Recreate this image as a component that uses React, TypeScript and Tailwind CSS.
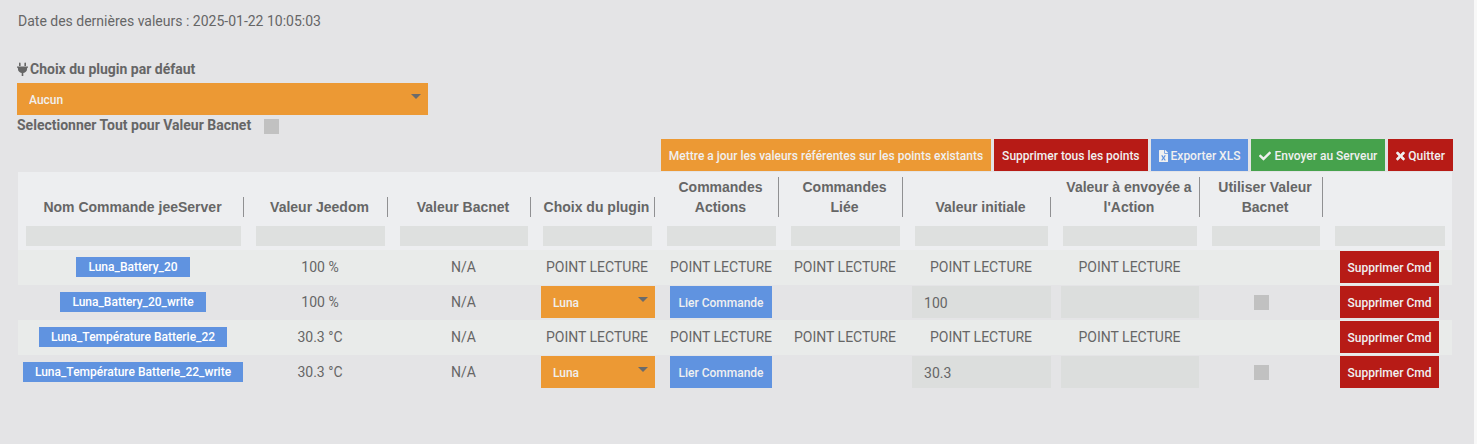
import type { ReactNode } from "react";
import { FaCheck, FaFileExcel, FaPlug, FaTimes } from "react-icons/fa";

type Point = {
  name: string;
  value: string;
  initial?: string;
};

const columns = [
  { label: "Nom Commande jeeServer", width: "w-[16.04%]" },
  { label: "Valeur Jeedom", width: "w-[10.04%]" },
  { label: "Valeur Bacnet", width: "w-[9.97%]" },
  { label: "Choix du plugin", width: "w-[8.65%]" },
  { label: "Commandes Actions", width: "w-[8.65%]" },
  { label: "Commandes Liée", width: "w-[8.65%]" },
  { label: "Valeur initiale", width: "w-[10.32%]" },
  { label: "Valeur à envoyée a l'Action", width: "w-[10.39%]" },
  { label: "Utiliser Valeur Bacnet", width: "w-[8.58%]" },
  { label: "", width: "w-[8.71%]" },
];

const points: Point[] = [
  { name: "Luna_Battery_20", value: "100 %" },
  { name: "Luna_Battery_20_write", value: "100 %", initial: "100" },
  { name: "Luna_Température Batterie_22", value: "30.3 °C" },
  { name: "Luna_Température Batterie_22_write", value: "30.3 °C", initial: "30.3" },
];

const colors = {
  orange: "bg-[#ec9934]",
  red: "bg-[#b71b16]",
  blue: "bg-[#6093e0]",
  green: "bg-[#46a24c]",
};

function Button({ color, children }: { color: keyof typeof colors; children: ReactNode }) {
  return (
    <button
      type="button"
      className={`inline-flex h-8 items-center gap-[3px] px-2 pt-[2px] align-top text-xs font-medium whitespace-nowrap text-[#f0f0f0] ${colors[color]}`}
    >
      {children}
    </button>
  );
}

function PluginSelect({ id, label, option }: { id: string; label?: string; option: string }) {
  return (
    <div className="relative w-full">
      <select
        id={id}
        aria-label={label}
        className="block h-8 w-full appearance-none rounded-none bg-[#ec9934] px-3 pt-[2px] text-xs font-medium text-[#f0f0f0]"
      >
        <option>{option}</option>
      </select>
      <svg
        viewBox="0 0 10 5"
        className="pointer-events-none absolute top-[11px] right-[7px] h-[5px] w-[10px] fill-[#6b6b6b]"
        aria-hidden="true"
      >
        <path d="M0 0h10L5 5z" />
      </svg>
    </div>
  );
}

function Checkbox({ id, label, className }: { id: string; label?: string; className?: string }) {
  return (
    <input
      id={id}
      type="checkbox"
      aria-label={label}
      className={`size-[15px] appearance-none bg-[#c1c1c1] checked:bg-[#6093e0] ${className ?? ""}`}
    />
  );
}

function PointRow({ point }: { point: Point }) {
  const writable = point.initial !== undefined;
  const field = "block h-8 w-full bg-[#dcdedd] px-3 pt-[2px] text-sm";
  const text = "p-0 pb-[2px] whitespace-nowrap";
  return (
    <tr className="h-[35px] text-center odd:bg-[#e9ebea]">
      <td className={text}>
        <span className="inline-block bg-[#6093e0] px-3 pt-px align-middle text-xs leading-[19px] font-medium whitespace-nowrap text-white">
          {point.name}
        </span>
      </td>
      <td className={text}>{point.value}</td>
      <td className={text}>N/A</td>
      {writable ? (
        <>
          <td className="pt-px pr-1 pb-[2px] pl-[6px]">
            <PluginSelect id={`plugin-${point.name}`} label={`Plugin ${point.name}`} option="Luna" />
          </td>
          <td className="pt-px pb-[2px]">
            <Button color="blue">Lier Commande</Button>
          </td>
          <td />
          <td className="pt-px pr-1 pb-[2px] pl-[5px]">
            <input aria-label={`Valeur initiale ${point.name}`} defaultValue={point.initial} className={field} />
          </td>
          <td className="pt-px pr-[5px] pb-[2px] pl-[6px]">
            <input aria-label={`Valeur envoyée ${point.name}`} className={field} />
          </td>
          <td className="p-0 pr-2 pb-[2px]">
            <Checkbox id={`bacnet-${point.name}`} label={`Utiliser ${point.name}`} className="align-middle" />
          </td>
        </>
      ) : (
        <>
          <td className={text}>POINT LECTURE</td>
          <td className={text}>POINT LECTURE</td>
          <td className={text}>POINT LECTURE</td>
          <td className={text}>POINT LECTURE</td>
          <td className={text}>POINT LECTURE</td>
          <td />
        </>
      )}
      <td className="pt-px pb-[2px]">
        <Button color="red">Supprimer Cmd</Button>
      </td>
    </tr>
  );
}

export default function App() {
  return (
    <div className="min-h-screen border-r-[3px] border-[#f8f8f8] bg-[#e4e4e6] pr-[21px] pl-[17px] font-[Roboto,sans-serif] text-sm leading-5 text-[#666666]">
      <p className="pt-[11px] pl-px">Date des dernières valeurs : 2025-01-22 10:05:03</p>

      <div className="mt-7 w-[411px] max-w-full">
        <label htmlFor="default-plugin" className="flex items-center gap-[2px] pb-1 font-bold">
          <svg viewBox="0 0 11 14" className="h-[14px] w-[11px] fill-current" aria-hidden="true">
            <path d="M2 1.2a.8.8 0 0 1 1.6 0V4H2zM7.4 1.2a.8.8 0 0 1 1.6 0V4H7.4zM0 4.4h11v1.4h-.9v1A4.5 4.5 0 0 1 6.3 11v3H4.7v-3A4.5 4.5 0 0 1 .9 6.800v-1H0z" />
          </svg>
          Choix du plugin par défaut
        </label>
        <PluginSelect id="default-plugin" option="Aucun" />
      </div>
      <div className="flex items-center gap-[13px]">
        <label htmlFor="select-all" className="font-bold">
          Selectionner Tout pour Valeur Bacnet
        </label>
        <Checkbox id="select-all" className="mt-[3px]" />
      </div>

      <div className="mt-1 flex flex-wrap justify-end gap-[3px]">
        <Button color="orange">Mettre a jour les valeurs référentes sur les points existants</Button>
        <Button color="red">Supprimer tous les points</Button>
        <Button color="blue">
          <FaFileExcel className="h-3 w-[9px]" aria-hidden="true" />
          Exporter XLS
        </Button>
        <Button color="green">
          <FaCheck className="size-3" aria-hidden="true" />
          Envoyer au Serveur
        </Button>
        <Button color="red">
          <FaTimes className="h-3 w-[9px] stroke-current stroke-[30]" aria-hidden="true" />
          Quitter
        </Button>
      </div>

      <div className="mt-px pr-px pl-px">
        <table className="w-full table-fixed border-collapse">
          <thead className="bg-[#edeef0] font-['Liberation_Sans',sans-serif]">
            <tr>
              {columns.map((column, i) => (
                <th key={i} scope="col" className={`px-1 pt-[5px] pb-[9px] align-bottom font-bold ${column.width}`}>
                  {column.label && (
                    <div className="border-r border-[#909092] px-1">{column.label}</div>
                  )}
                </th>
              ))}
            </tr>
            <tr>
              {columns.map((column, i) => (
                <td key={i} className="pr-[7px] pb-1 pl-2">
                  <input aria-label={`Filtre ${column.label}`} className="block h-5 w-full bg-[#dee0df] px-1" />
                </td>
              ))}
            </tr>
          </thead>
          <tbody>
            {points.map((point) => (
              <PointRow key={point.name} point={point} />
            ))}
          </tbody>
        </table>
      </div>
    </div>
  );
}
